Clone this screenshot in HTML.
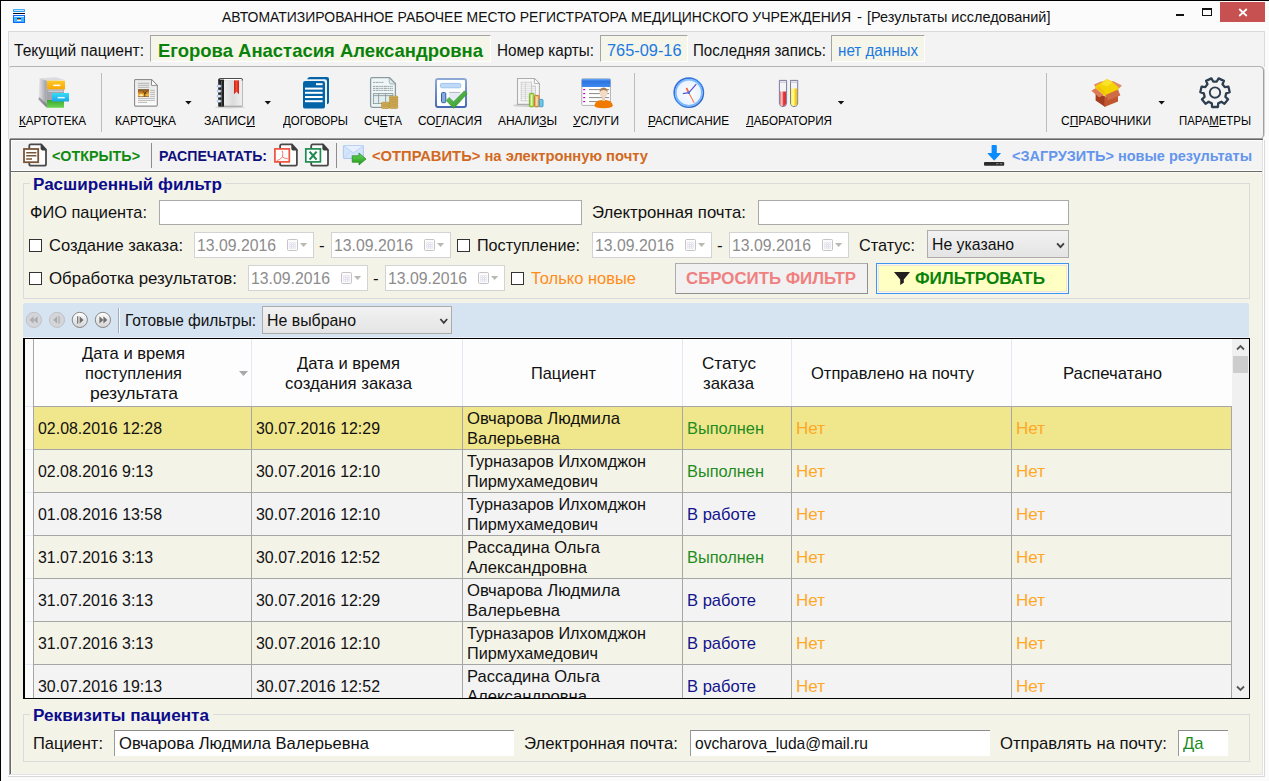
<!DOCTYPE html>
<html><head><meta charset="utf-8"><title>UI</title>
<style>
html,body{margin:0;padding:0;background:#fff;}
#win{position:relative;width:1269px;height:781px;overflow:hidden;background:#fbfbfb;font-family:"Liberation Sans",sans-serif;}
#win div,#win span,#win svg{position:absolute;box-sizing:border-box;}
.t{white-space:pre;transform-origin:0 50%;font-family:"Liberation Sans",sans-serif;}
.sunk{background:#f5f5e9;border-top:1px solid #a4a4a4;border-left:1px solid #a4a4a4;border-right:1px solid #fff;border-bottom:1px solid #fff;}
.inp{background:#fff;border:1px solid #a9a9a9;}
.date{background:#fff;border:1px solid #d3d3d3;width:120px;height:26px;}
.cb{width:13px;height:13px;border:1px solid #333;background:#fff;}
.vsep{width:1px;background:#bcbcbc;}
.sel{background:linear-gradient(#f2f2f2,#e4e4e4);border:1px solid #acacac;}
.gb{border:1px solid #dadada;}
.row{left:34px;width:1198px;height:42px;}
.hl{left:33px;width:1199px;height:1px;background:#a6a6a6;}
.vl{top:407px;width:1px;height:291px;background:#a6a6a6;}
.hvl{top:339px;width:1px;height:67px;background:#e3e9f3;}
.nb{width:17px;height:17px;border-radius:50%;border:1px solid #b9b9b9;background:linear-gradient(#fafafa,#dcdcdc);}
.t u{text-decoration:underline;text-decoration-thickness:1px;text-underline-offset:0.5px;}

</style></head>
<body>
<div id="win">
<!-- window frame -->
<div style="left:0;top:0;width:1269px;height:1px;background:#000"></div>
<div style="left:0;top:0;width:1px;height:781px;background:#000"></div>
<!-- title bar buttons -->
<div style="left:1220px;top:2px;width:45px;height:20px;background:#c75050"></div>
<svg style="left:1238px;top:8px" width="10" height="9" viewBox="0 0 10 9"><path d="M1.2 1 L8.8 8 M8.8 1 L1.2 8" stroke="#fff" stroke-width="1.7" fill="none"/></svg>
<div style="left:1176px;top:14px;width:8px;height:2px;background:#111"></div>
<div style="left:1202px;top:8px;width:10px;height:8px;border:1px solid #111;border-top:2px solid #111"></div>
<!-- patient bar -->
<div style="left:8px;top:31px;width:1257px;height:36px;background:#f3f3f3;border-top:1px solid #dadada;border-left:1px solid #dadada;border-right:1px solid #dadada"></div>
<div class="sunk" style="left:150px;top:35px;width:341px;height:27px"></div>
<div class="sunk" style="left:600px;top:35px;width:88px;height:27px"></div>
<div class="sunk" style="left:831px;top:35px;width:94px;height:27px"></div>
<!-- toolbar -->
<div style="left:8px;top:66px;width:1256px;height:73px;background:#f3f3f3;border-top:1px solid #b4b4b4;border-left:1px solid #dcdcdc;border-right:1px solid #a0a0a0;border-radius:4px 5px 5px 0;box-shadow:1px 0 0 #d4d4d4"></div>
<div class="vsep" style="left:101px;top:73px;height:59px"></div>
<div class="vsep" style="left:634px;top:73px;height:59px"></div>
<div class="vsep" style="left:1046px;top:73px;height:59px"></div>
<!-- frame top -->
<div style="left:10px;top:138px;width:1253px;height:1px;background:#9a9a9a;border-radius:0 3px 0 0"></div>
<div style="left:9px;top:139px;width:1254px;height:1px;background:#666"></div>
<!-- action bar -->
<div style="left:11px;top:140px;width:1251px;height:31px;background:#f3f3f3;border-top:1px solid #fff;border-bottom:1px solid #fff;border-left:1px solid #fff"></div>
<div style="left:11px;top:171px;width:1251px;height:1px;background:#6a6a6a"></div>
<div class="vsep" style="left:151px;top:143px;height:25px;background:#8c8c8c"></div>
<div class="vsep" style="left:336px;top:143px;height:25px;background:#8c8c8c"></div>
<!-- content -->
<div style="left:9px;top:139px;width:1px;height:636px;background:#a0a0a0"></div>
<div style="left:10px;top:139px;width:1px;height:635px;background:#696969"></div>
<div style="left:11px;top:172px;width:1251px;height:602px;background:#f4f3e8;border-top:1px solid #fbfbf2;border-left:1px solid #fbfbf2"></div>
<div style="left:1262px;top:140px;width:1px;height:635px;background:#e3e3e3"></div>
<div style="left:1263px;top:140px;width:1px;height:636px;background:#fff"></div>
<div style="left:1264px;top:140px;width:1px;height:637px;background:#d9d9d9"></div>
<div style="left:10px;top:774px;width:1253px;height:1px;background:#e3e3e3"></div>
<div style="left:9px;top:775px;width:1255px;height:1px;background:#fff"></div>
<div style="left:8px;top:776px;width:1257px;height:1px;background:#d9d9d9"></div>
<!-- filter groupbox -->
<div class="gb" style="left:23px;top:183px;width:1227px;height:116px"></div>
<div style="left:30px;top:178px;width:195px;height:12px;background:#f4f3e8"></div>
<div class="inp" style="left:159px;top:200px;width:423px;height:25px"></div>
<div class="inp" style="left:758px;top:200px;width:311px;height:25px"></div>
<div class="cb" style="left:29px;top:239px"></div>
<div class="date" style="left:194px;top:232px"></div>
<div class="date" style="left:331px;top:232px"></div>
<div class="cb" style="left:457px;top:239px"></div>
<div class="date" style="left:592px;top:232px"></div>
<div class="date" style="left:729px;top:232px"></div>
<div class="sel" style="left:927px;top:230px;width:142px;height:28px"></div>
<div class="cb" style="left:29px;top:272px"></div>
<div class="date" style="left:248px;top:265px"></div>
<div class="date" style="left:385px;top:265px"></div>
<div class="cb" style="left:511px;top:272px"></div>
<div style="left:675px;top:263px;width:193px;height:31px;background:#f1f1f1;border:1px solid #adadad;border-bottom-color:#8f8f8f;border-right-color:#8f8f8f"></div>
<div style="left:876px;top:263px;width:193px;height:31px;background:#ffffc4;border:1px solid #3c96f0;box-shadow:inset 0 0 0 1px #fbf6f0, inset 0 0 0 2px #e9e6df"></div>
<!-- navigator -->
<div style="left:23px;top:303px;width:1226px;height:35px;background:#d6e3f1;border-radius:3px 3px 0 0"></div>
<div class="vsep" style="left:118px;top:308px;height:25px;background:#f6f9fc;width:2px;border-left:1px solid #a4aeb9"></div>
<div style="left:23px;top:337px;width:1226px;height:1px;background:#edf2f8"></div>
<div class="sel" style="left:262px;top:306px;width:190px;height:28px"></div>
<!-- grid -->
<div style="left:23px;top:338px;width:1227px;height:361px;background:#fdfdfd;border:1px solid #000;border-left:2px solid #000"></div>
<div style="left:25px;top:339px;width:8px;height:359px;background:#fbfbfb"></div>
<div style="left:33px;top:339px;width:1px;height:359px;background:#a6a6a6"></div>
<div class="row" style="top:407px;height:42px;background:#f0e68c"></div>
<div class="row" style="top:450px;height:42px;background:#f4f3e8"></div>
<div class="row" style="top:493px;height:42px;background:#f3f3f3"></div>
<div class="row" style="top:536px;height:42px;background:#f4f3e8"></div>
<div class="row" style="top:579px;height:42px;background:#f3f3f3"></div>
<div class="row" style="top:622px;height:42px;background:#f4f3e8"></div>
<div class="row" style="top:665px;height:33px;background:#f3f3f3"></div>
<div class="hl" style="top:406px"></div>
<div class="hl" style="top:449px"></div>
<div class="hl" style="top:492px"></div>
<div class="hl" style="top:535px"></div>
<div class="hl" style="top:578px"></div>
<div class="hl" style="top:621px"></div>
<div class="hl" style="top:664px"></div>
<div class="vl" style="left:251px"></div>
<div class="vl" style="left:462px"></div>
<div class="vl" style="left:682px"></div>
<div class="vl" style="left:791px"></div>
<div class="vl" style="left:1011px"></div>
<div class="vl" style="left:1231px"></div>
<div class="hvl" style="left:251px"></div>
<div class="hvl" style="left:462px"></div>
<div class="hvl" style="left:682px"></div>
<div class="hvl" style="left:791px"></div>
<div class="hvl" style="left:1011px"></div>
<div style="left:1232px;top:339px;width:17px;height:359px;background:#f0f0f0"></div>
<div style="left:1233px;top:356px;width:15px;height:17px;background:#cdcdcd"></div>
<svg style="left:1236px;top:344px" width="9" height="7" viewBox="0 0 9 7"><path d="M1 5.5 L4.5 2 L8 5.5" stroke="#555" stroke-width="1.8" fill="none"/></svg>
<svg style="left:1236px;top:685px" width="9" height="7" viewBox="0 0 9 7"><path d="M1 1.5 L4.5 5 L8 1.5" stroke="#555" stroke-width="1.8" fill="none"/></svg>
<svg style="left:238px;top:370px" width="11" height="7" viewBox="0 0 11 7"><path d="M1 1 L10 1 L5.5 6 Z" fill="#a8a8a8"/></svg>
<div class="gb" style="left:23px;top:714px;width:1227px;height:48px"></div>
<div style="left:30px;top:709px;width:183px;height:12px;background:#f4f3e8"></div>
<div style="left:114px;top:730px;width:400px;height:26px;background:#fff;border-top:1px solid #8c8c8c;border-left:1px solid #9a9a9a"></div>
<div style="left:690px;top:730px;width:300px;height:26px;background:#fff;border-top:1px solid #8c8c8c;border-left:1px solid #9a9a9a"></div>
<div style="left:1178px;top:730px;width:50px;height:26px;background:#fff;border-top:1px solid #8c8c8c;border-left:1px solid #9a9a9a"></div>
<div style="left:25px;top:406px;width:8px;height:1px;background:#e4eaf4"></div>
<div style="left:25px;top:449px;width:8px;height:1px;background:#e4eaf4"></div>
<div style="left:25px;top:492px;width:8px;height:1px;background:#e4eaf4"></div>
<div style="left:25px;top:535px;width:8px;height:1px;background:#e4eaf4"></div>
<div style="left:25px;top:578px;width:8px;height:1px;background:#e4eaf4"></div>
<div style="left:25px;top:621px;width:8px;height:1px;background:#e4eaf4"></div>
<div style="left:25px;top:664px;width:8px;height:1px;background:#e4eaf4"></div>
<svg style="left:0;top:0" width="1269" height="781" viewBox="0 0 1269 781">
<defs>
<linearGradient id="gCab" x1="0" x2="1"><stop offset="0" stop-color="#e9e9ec"/><stop offset="1" stop-color="#9c9ca6"/></linearGradient>
<linearGradient id="gYel" x1="0" y1="0" x2="0" y2="1"><stop offset="0" stop-color="#ffc928"/><stop offset="1" stop-color="#f7a600"/></linearGradient>
<linearGradient id="gCy" x1="0" y1="0" x2="0" y2="1"><stop offset="0" stop-color="#35dcf6"/><stop offset="1" stop-color="#1aa8e6"/></linearGradient>
<linearGradient id="gGr" x1="0" y1="0" x2="0" y2="1"><stop offset="0" stop-color="#3aa82c"/><stop offset="1" stop-color="#6fd455"/></linearGradient>
<linearGradient id="gDoc" x1="0" y1="0" x2="0" y2="1"><stop offset="0" stop-color="#e4e4e4"/><stop offset="1" stop-color="#fafafa"/></linearGradient>
<linearGradient id="gSun" x1="0" y1="0" x2="0" y2="1"><stop offset="0" stop-color="#6e4a1e"/><stop offset=".55" stop-color="#e0912a"/><stop offset=".8" stop-color="#ffc23c"/><stop offset="1" stop-color="#7a4a14"/></linearGradient>
<linearGradient id="gNb" x1="0" x2="1"><stop offset="0" stop-color="#ececec"/><stop offset=".5" stop-color="#dcdcdc"/><stop offset="1" stop-color="#efefef"/></linearGradient>
<linearGradient id="gRed" x1="0" x2="1"><stop offset="0" stop-color="#c8201a"/><stop offset=".5" stop-color="#f04a32"/><stop offset="1" stop-color="#c8201a"/></linearGradient>
<linearGradient id="gFrm" x1="0" y1="0" x2="0" y2="1"><stop offset="0" stop-color="#8fa9d6"/><stop offset="1" stop-color="#4669b4"/></linearGradient>
<linearGradient id="gChk" x1="0" y1="0" x2="1" y2="1"><stop offset="0" stop-color="#6ac85a"/><stop offset="1" stop-color="#2f962a"/></linearGradient>
<linearGradient id="gHdr" x1="0" y1="0" x2="0" y2="1"><stop offset="0" stop-color="#6fb0ff"/><stop offset=".3" stop-color="#2c74e0"/><stop offset="1" stop-color="#3f8af0"/></linearGradient>
<radialGradient id="gClk" cx=".5" cy=".5" r=".5"><stop offset="0" stop-color="#ffffff"/><stop offset=".8" stop-color="#eaf3ff"/><stop offset="1" stop-color="#c8e0ff"/></radialGradient>
<linearGradient id="gRng" x1="0" y1="0" x2="1" y2="1"><stop offset="0" stop-color="#2a5fd0"/><stop offset=".5" stop-color="#3a8af0"/><stop offset="1" stop-color="#2456b8"/></linearGradient>
<linearGradient id="gTr" x1="0" x2="1"><stop offset="0" stop-color="#f06a6a"/><stop offset=".3" stop-color="#ffd0d0"/><stop offset=".6" stop-color="#e03a3a"/><stop offset="1" stop-color="#d83030"/></linearGradient>
<linearGradient id="gTy" x1="0" x2="1"><stop offset="0" stop-color="#fff23a"/><stop offset=".35" stop-color="#ffffa0"/><stop offset=".7" stop-color="#f8d21a"/><stop offset="1" stop-color="#f0c010"/></linearGradient>
<linearGradient id="gCoin" x1="0" y1="0" x2="0" y2="1"><stop offset="0" stop-color="#f6e3a0"/><stop offset="1" stop-color="#c89a30"/></linearGradient>
<linearGradient id="gArr" x1="0" y1="0" x2="0" y2="1"><stop offset="0" stop-color="#6fd45a"/><stop offset="1" stop-color="#1f9a1f"/></linearGradient>
<linearGradient id="gBtnE" x1="0" y1="0" x2="0" y2="1"><stop offset="0" stop-color="#ffffff"/><stop offset="1" stop-color="#d4d4d4"/></linearGradient>
</defs>

<!-- title icon -->
<g>
<rect x="13" y="9" width="12" height="3.2" rx="1" fill="#2c9cf2"/>
<rect x="14" y="9.8" width="10" height="1.2" fill="#bdeeff"/>
<rect x="13" y="12" width="12" height="3" fill="#fff"/>
<rect x="13" y="13" width="12" height="1" fill="#0a0a14"/>
<rect x="13" y="15" width="12" height="8" fill="#0a66ff"/>
<rect x="14" y="16" width="10" height="6" fill="#43b3ff"/>
<rect x="14" y="16" width="10" height="1" fill="#d8f2ff"/>
<rect x="17" y="18" width="4" height="1" fill="#153a5a"/>
<rect x="18" y="19" width="2" height="1" fill="#ff8a2a"/>
<rect x="17" y="20" width="4" height="1" fill="#fff"/>
</g>

<!-- KARTOTEKA: cabinet -->
<g>
<polygon points="39.5,78.2 55.8,77.2 64.7,80 47,81" fill="#dcdce0"/>
<polygon points="39.5,78.2 46.8,80.8 46.8,107.8 38.5,99.6" fill="url(#gCab)"/>
<polygon points="38.5,99.6 46.8,107.8 46.8,104 39,97" fill="#6e6e76" opacity=".6"/>
<rect x="47" y="80.7" width="18" height="8.8" fill="url(#gYel)"/>
<rect x="53.3" y="84.6" width="7" height="1.5" fill="#fff"/>
<rect x="47" y="89.5" width="17" height="11" fill="#a4a6ae"/>
<rect x="48.4" y="90.6" width="15" height="1.2" fill="#d6d6dc"/>
<rect x="47" y="100" width="17" height="7.8" fill="url(#gGr)"/>
<rect x="52" y="93" width="17" height="8.5" fill="url(#gCy)"/>
<rect x="57.7" y="96.9" width="7" height="1.5" fill="#e6f8ff"/>
</g>

<!-- KARTOCHKA: doc with picture -->
<g>
<path d="M135.2 79.6 H151.5 L157.3 85.4 V105 Q157.3 106.1 156.2 106.1 H135.2 Q134.6 106.1 134.6 105 V80.7 Q134.6 79.6 135.2 79.6 Z" fill="#fff" stroke="#8e8e8e" stroke-width="1.2"/>
<path d="M136.2 81.2 H151 V85.8 H155.7 V104.5 H136.2 Z" fill="url(#gDoc)"/>
<path d="M151.5 79.6 V85.4 H157.3 Z" fill="#fff" stroke="#8e8e8e" stroke-width="1"/>
<g stroke="#b4b4b4" stroke-width="0.9">
<path d="M138 83.4 H149 M138 85.4 H149 M138 87.4 H149"/>
<path d="M150.2 90.4 H155 M150.2 92.4 H155 M150.2 94.4 H155 M150.2 96.4 H155"/>
<path d="M138 98.4 H155 M138 100.4 H155 M138 102.4 H147"/>
</g>
<rect x="138" y="89.2" width="11" height="7.6" fill="url(#gSun)"/>
<ellipse cx="141.2" cy="95.3" rx="2" ry="1" fill="#fff2b0"/>
<path d="M144.8 96.6 V92.6 M144.8 93.6 L143.2 91.4 M144.8 93.2 L146.8 91.2 M144.8 94.4 L146.2 93" stroke="#3a260c" stroke-width="0.7" fill="none"/>
</g>

<!-- ZAPISI: notebook -->
<g>
<ellipse cx="230" cy="107.2" rx="15" ry="1.3" fill="#000" opacity=".12"/>
<rect x="218.3" y="78.3" width="24.6" height="28.4" rx="1.8" fill="#9c9c9c"/>
<path d="M218.3 80 Q218.3 78.3 220 78.3 H241 Q242.9 78.3 242.9 80 V80.4 H218.3 Z" fill="#2a2a2a"/>
<rect x="224" y="80.2" width="18.3" height="25.6" rx="1" fill="url(#gNb)"/>
<path d="M220.2 79 H241 Q242.3 79 242.3 80.6 H219.4 Z" fill="#fff"/>
<rect x="218.3" y="79.6" width="5.7" height="27" fill="#222"/>
<rect x="221" y="81" width="1" height="25" fill="#555"/>
<rect x="234" y="80.4" width="5" height="13.6" fill="url(#gRed)"/>
<path d="M234 94 L236.5 91.6 L239 94 V94.2 H234 Z" fill="url(#gNb)"/>
<path d="M234 90 V94 L236.5 91.6 L239 94 V90 Z" fill="url(#gRed)"/>
<g fill="#fff" stroke="#7f9cc8" stroke-width="0.7">
<rect x="217.2" y="85" width="4" height="2.2" rx="1.1"/>
<rect x="217.2" y="90" width="4" height="2.2" rx="1.1"/>
<rect x="217.2" y="95" width="4" height="2.2" rx="1.1"/>
<rect x="217.2" y="100" width="4" height="2.2" rx="1.1"/>
</g>
</g>

<!-- DOGOVORY -->
<g fill="#0464a8">
<path d="M307 79.2 Q308.2 77 310 77 H327 Q329 77 329 79 V102.5 Q328.6 104 327 104.2 V81.5 Q327 79.2 324.8 79.2 Z"/>
<rect x="303" y="81" width="22" height="27.6" rx="2.2"/>
</g>
<g fill="#fff">
<rect x="316" y="83.2" width="6.6" height="2"/>
<rect x="305" y="87.6" width="17.6" height="2"/>
<rect x="305" y="91.8" width="17.6" height="2"/>
<rect x="305" y="96" width="17.6" height="2"/>
<rect x="305" y="100.2" width="17.6" height="2"/>
</g>

<!-- SCHETA -->
<g>
<path d="M372.2 77.6 H389.6 L395.4 83.4 V105.6 Q395.4 107.4 393.6 107.4 H372.2 Q370.6 107.4 370.6 105.6 V79.4 Q370.6 77.6 372.2 77.6 Z" fill="#eff6f7" stroke="#8c9c9e" stroke-width="1.3"/>
<path d="M389.2 78.2 V82 Q389.2 84 391.2 84 H395 Z" fill="#dce8ea" stroke="#9aaaac" stroke-width="0.8"/>
<g stroke="#8e9a9c" stroke-width="0.9" stroke-dasharray="2 0.6 3 0.6 1.5 0.6">
<path d="M373 82.4 H384"/><path d="M373 86.4 H393"/><path d="M373 88.4 H393"/><path d="M373 90.4 H393"/>
</g>
<rect x="373.4" y="93.6" width="19.4" height="10" fill="#e2eef0" stroke="#8e9c9e" stroke-width="0.9"/>
<path d="M373.4 95.6 H392.8 M378.6 93.6 V103.6 M385.6 93.6 V103.6" stroke="#8e9c9e" stroke-width="0.9"/>
<g fill="url(#gCoin)" stroke="#a67c1e" stroke-width="0.7">
<rect x="381.4" y="102.3" width="8" height="2" rx="1"/>
<rect x="381.4" y="104.3" width="8" height="2" rx="1"/>
<rect x="381.4" y="106.3" width="8" height="2" rx="1"/>
<rect x="389.4" y="96.2" width="8.4" height="2" rx="1"/>
<rect x="389.4" y="98.2" width="8.4" height="2" rx="1"/>
<rect x="389.4" y="100.2" width="8.4" height="2" rx="1"/>
<rect x="389.4" y="102.3" width="8.4" height="2" rx="1"/>
<rect x="389.4" y="104.3" width="8.4" height="2" rx="1"/>
<rect x="389.4" y="106.3" width="8.4" height="2" rx="1"/>
</g>
</g>

<!-- SOGLASIYA -->
<g>
<rect x="436" y="79" width="30" height="28" rx="2" fill="#fff" stroke="url(#gFrm)" stroke-width="2"/>
<rect x="440.4" y="83.4" width="20.4" height="4.4" rx="1.4" fill="#c2d9f4" stroke="#93c2f2" stroke-width="0.9"/>
<rect x="441.5" y="92.5" width="4.3" height="10.2" rx="1.2" fill="#8aa9d6" stroke="#2f62b6" stroke-width="1"/>
<rect x="449.3" y="92.4" width="11" height="10.4" fill="#e6eaf5"/>
<path d="M449.3 92.4 H460.3" stroke="#b4b4bc" stroke-width="1"/>
<path d="M446.2 100.4 L449 97.4 L453.6 101.8 L464.4 90.8 L467.2 93.8 L453.6 108.4 Z" fill="url(#gChk)" stroke="#2a8a24" stroke-width="0.5"/>
</g>

<!-- ANALIZY -->
<g>
<ellipse cx="528" cy="105.4" rx="15" ry="1.6" fill="#000" opacity=".14"/>
<path d="M517.5 78.5 H534.4 L539.4 83.5 V104.4 H517.5 Z" fill="#f7f7f7" stroke="#adadad" stroke-width="1.1"/>
<path d="M534.4 78.5 V83.5 H539.4 Z" fill="#fff" stroke="#adadad" stroke-width="0.9"/>
<rect x="521.2" y="82.2" width="10.4" height="18.6" fill="#fff" stroke="#c4c4c4" stroke-width="0.8"/>
<rect x="531.6" y="86.2" width="4" height="14.6" fill="#fff" stroke="#c4c4c4" stroke-width="0.8"/>
<path d="M521.2 84.2 H531.6 M521.2 86.2 H535.6 M521.2 88.2 H535.6 M521.2 90.2 H535.6 M521.2 92.2 H535.6 M521.2 94.2 H535.6 M521.2 96.2 H535.6 M521.2 98.2 H535.6 M525.4 82.2 V100.8" stroke="#cdcdcd" stroke-width="0.8"/>
<rect x="529.4" y="93.4" width="4.6" height="13.4" rx="0.8" fill="#b4dc6a" stroke="#7db22c" stroke-width="1"/>
<rect x="531" y="95" width="1.2" height="10.4" fill="#e4f6b8"/>
<rect x="534.6" y="95.4" width="4.4" height="11.4" rx="0.8" fill="#f4b870" stroke="#c47a2e" stroke-width="1"/>
<rect x="536.2" y="97" width="1.2" height="8.4" fill="#fde0b8"/>
<rect x="539.4" y="99.4" width="3.6" height="7.4" rx="0.8" fill="#6ac8ea" stroke="#3d9fcc" stroke-width="1"/>
</g>

<!-- USLUGI -->
<g>
<rect x="581.8" y="78.8" width="28.6" height="26.6" rx="1" fill="#fff" stroke="#a8a8a8" stroke-width="0.9"/>
<rect x="581.8" y="78.8" width="28.6" height="8.2" fill="url(#gHdr)"/>
<g fill="#c800c8"><rect x="583.2" y="89" width="2" height="1.2"/><rect x="583.2" y="93" width="2" height="1.2"/><rect x="583.2" y="97" width="2" height="1.2"/><rect x="583.2" y="101" width="2" height="1.2"/></g>
<path d="M589 89.6 H609 M589 93.6 H609 M589 97.6 H609 M589 101.6 H600" stroke="#7a7a7a" stroke-width="0.9"/>
<path d="M594.4 105.6 Q595.4 100.2 601.6 100 H605.6 Q611.8 100.2 612.8 105.6 Q612.4 108.3 603.6 108.3 Q594.8 108.3 594.4 105.6 Z" fill="#f07a00"/>
<rect x="602.2" y="97" width="2.8" height="4" fill="#e6c8aa"/>
<ellipse cx="603.6" cy="93" rx="3.9" ry="4.9" fill="#f3dcc6"/>
<path d="M599.6 92.4 Q599.4 87.6 603.6 87.4 Q607.8 87.6 607.6 92.4 Q606.6 90 603.6 90 Q600.6 90 599.6 92.4 Z" fill="#a67c52"/>
</g>

<!-- RASPISANIE: clock -->
<g>
<circle cx="688.8" cy="92.7" r="14.6" fill="url(#gClk)" stroke="url(#gRng)" stroke-width="1.6"/>
<circle cx="688.8" cy="92.7" r="13" fill="none" stroke="#7ab8fa" stroke-width="1.6"/>
<path d="M686.6 88.3 L688.8 92.7 L694.1 102.8" stroke="#ff7a50" stroke-width="1.1" fill="none"/>
<path d="M686.4 88 L688.4 92" stroke="#ff6a40" stroke-width="1.7"/>
<path d="M696.3 84.2 L688.8 92.7 L682.8 93.6" stroke="#5a52d0" stroke-width="1.2" fill="none"/>
<circle cx="688.8" cy="92.7" r="1.2" fill="#2a7ae0"/>
</g>

<!-- LABORATORIYA: test tubes -->
<g>
<path d="M779.4 80.4 H786.6 V103 Q786.6 106.6 783 106.6 Q779.4 106.6 779.4 103 Z" fill="#f4f4f6" stroke="#6c6c92" stroke-width="0.9"/>
<path d="M780 91.6 H786 V103 Q786 106 783 106 Q780 106 780 103 Z" fill="url(#gTr)"/>
<path d="M779.4 82.2 H786.6" stroke="#b8b8c8" stroke-width="0.8"/>
<path d="M790.5 80.4 H797.7 V103 Q797.7 106.6 794.1 106.6 Q790.5 106.6 790.5 103 Z" fill="#f4f4f6" stroke="#6c6c92" stroke-width="0.9"/>
<path d="M791.1 88.4 H797.1 V103 Q797.1 106 794.1 106 Q791.1 106 791.1 103 Z" fill="url(#gTy)"/>
<path d="M790.5 82.2 H797.7" stroke="#b8b8c8" stroke-width="0.8"/>
</g>

<!-- SPRAVOCHNIKI: box -->
<g>
<polygon points="1094,84.6 1101,81.6 1113,81 1122,85.4 1119,88.6 1096,88.4" fill="#e08c68"/>
<polygon points="1095.4,88.6 1095.4,86.2 1101.4,82.4 1107,79 1112,81.6 1118.6,87.6 1118.4,90 1105,96.6" fill="#f4d400"/>
<polygon points="1101,84 1107,79.2 1112.6,82.4 1107,86.6" fill="#fbe32a"/>
<polygon points="1096,88 1105,95 1105,92 1099,86" fill="#efb812" opacity=".7"/>
<polygon points="1095.6,92 1105.2,96.4 1105.2,107 1095.6,100.4" fill="#a23c1e"/>
<polygon points="1104.4,97 1118,92 1118,101.4 1104.4,107" fill="#c0552f"/>
<polygon points="1105.4,95 1118,89.6 1120.4,95.4 1108,100.2" fill="#cf6c46"/>
<polygon points="1091.4,90.8 1095.5,88.2 1103.6,95 1099.2,97.6" fill="#dd7a5a"/>
</g>
<!-- PARAMETRY: gear -->
<path d="M1218.18 103.34 L1217.93 107.00 L1212.07 107.00 L1211.82 103.34 L1208.59 101.78 L1205.57 103.87 L1201.91 99.29 L1204.62 96.81 L1203.82 93.31 L1200.30 92.25 L1201.61 86.54 L1205.24 87.11 L1207.47 84.30 L1206.11 80.89 L1211.39 78.35 L1213.21 81.54 L1216.79 81.54 L1218.61 78.35 L1223.89 80.89 L1222.53 84.30 L1224.76 87.11 L1228.39 86.54 L1229.70 92.25 L1226.18 93.31 L1225.38 96.81 L1228.09 99.29 L1224.43 103.87 L1221.41 101.78 Z" fill="none" stroke="#2c3e50" stroke-width="2.3" stroke-linejoin="round"/>
<circle cx="1215.0" cy="92.6" r="5.2" fill="none" stroke="#2c3e50" stroke-width="1.9"/>
<path d="M185.20000000000002 101 H191.6 L188.4 104.4 Z" fill="#111"/>
<path d="M264.6 101 H271.0 L267.8 104.4 Z" fill="#111"/>
<path d="M837.8 101 H844.2 L841 104.4 Z" fill="#111"/>
<path d="M1158.3999999999999 101 H1164.8 L1161.6 104.4 Z" fill="#111"/>
<!-- open icon -->
<path d="M30.6 144.3 H41.2 L46 149.6 V164 Q46 165.7 44.3 165.7 H31 Q29.3 165.7 29.3 164 V145.6 Q29.3 144.3 30.6 144.3 Z" fill="#fdfdfd" stroke="#4a4a4a" stroke-width="1.8" stroke-linejoin="round"/>
<path d="M40.6 143.6 L46.8 150.4 H42.4 Q40.6 150.4 40.6 148.6 Z" fill="#3c3c3c"/>
<rect x="24" y="149" width="14.2" height="13.2" fill="#fff" stroke="#7a5638" stroke-width="1.8"/>
<path d="M26.2 152.7 H36.4 M26.2 155.8 H36.4 M26.2 158.9 H32" stroke="#7a5638" stroke-width="1.5"/>
<!-- pdf -->
<path d="M281.7 144.4 H291.90000000000003 L296.90000000000003 149.8 V164 Q296.90000000000003 165.6 295.3 165.6 H281.7 Q280.1 165.6 280.1 164 V146 Q280.1 144.4 281.7 144.4 Z" fill="#fdfdfd" stroke="#4a4a4a" stroke-width="1.8" stroke-linejoin="round"/>
<path d="M291.3 143.6 L297.7 150.6 H293.1 Q291.3 150.6 291.3 148.8 Z" fill="#3c3c3c"/>
<rect x="274.9" y="148.9" width="14.4" height="13" fill="#fff" stroke="#f0503c" stroke-width="1.7"/>
<path d="M282.2 150.6 Q283.4 153.6 282.4 157 Q280 160 276.8 160.6 M282.4 157 Q285 158.6 287.8 158.8" stroke="#f0705c" stroke-width="0.9" fill="none"/>
<!-- xls -->
<path d="M312.79999999999995 144.4 H323.0 L328.0 149.8 V164 Q328.0 165.6 326.4 165.6 H312.79999999999995 Q311.2 165.6 311.2 164 V146 Q311.2 144.4 312.79999999999995 144.4 Z" fill="#fdfdfd" stroke="#4a4a4a" stroke-width="1.8" stroke-linejoin="round"/>
<path d="M322.4 143.6 L328.79999999999995 150.6 H324.2 Q322.4 150.6 322.4 148.8 Z" fill="#3c3c3c"/>
<rect x="305.8" y="148.9" width="14.6" height="13" fill="#fff" stroke="#1e8c50" stroke-width="1.7"/>
<path d="M309.6 151.6 L316.6 159.6 M316.6 151.6 L309.6 159.6" stroke="#1e8c50" stroke-width="2.2"/>
<!-- mail -->
<rect x="343.4" y="145.5" width="20" height="13" rx="0.8" fill="#d4e4fa" stroke="#a4c4f0" stroke-width="0.9"/>
<path d="M343.6 145.8 L353.4 153 L363.2 145.8" stroke="#b4d0f6" stroke-width="0.9" fill="#e6f0fd"/>
<path d="M343.6 158.2 L350.4 151.2 M363.2 158.2 L356.4 151.2" stroke="#bcd4f6" stroke-width="0.8"/>
<path d="M352.2 155.8 H359 V153 L366 159 L359 165 V162.2 H352.2 Z" fill="url(#gArr)" stroke="#1a8a1a" stroke-width="0.7" stroke-linejoin="round"/>
<!-- download -->
<path d="M991.6 145.8 Q991.6 144.9 992.5 144.9 H995.9 Q996.8 144.9 996.8 145.8 V153 H1000.4 Q1001 153.2 1000.6 153.8 L994.6 160.2 Q994.2 160.6 993.8 160.2 L987.8 153.8 Q987.4 153.2 988 153 H991.6 Z" fill="#0a8cff"/>
<rect x="984" y="162.1" width="20.2" height="3.6" rx="0.9" fill="#2c2c2c"/>
<rect x="996" y="163.3" width="2.6" height="0.9" fill="#8c8c8c"/><rect x="999.8" y="163.3" width="2.6" height="0.9" fill="#8c8c8c"/>
<!-- calendars -->
<rect x="287.5" y="239.5" width="10" height="11" rx="1" fill="#fbfbfd" stroke="#c9c3c3" stroke-width="1"/><rect x="289.3" y="242.3" width="6.4" height="6.4" fill="#e1e1ed"/><rect x="290.0" y="243.0" width="1" height="1" fill="#fff"/><rect x="290.0" y="245.1" width="1" height="1" fill="#fff"/><rect x="290.0" y="247.2" width="1" height="1" fill="#fff"/><rect x="292.1" y="243.0" width="1" height="1" fill="#fff"/><rect x="292.1" y="245.1" width="1" height="1" fill="#fff"/><rect x="292.1" y="247.2" width="1" height="1" fill="#fff"/><rect x="294.2" y="243.0" width="1" height="1" fill="#fff"/><rect x="294.2" y="245.1" width="1" height="1" fill="#fff"/><rect x="294.2" y="247.2" width="1" height="1" fill="#fff"/><path d="M300 243 H307.2 L303.6 247 Z" fill="#b9b9b3"/>
<rect x="424.5" y="239.5" width="10" height="11" rx="1" fill="#fbfbfd" stroke="#c9c3c3" stroke-width="1"/><rect x="426.3" y="242.3" width="6.4" height="6.4" fill="#e1e1ed"/><rect x="427.0" y="243.0" width="1" height="1" fill="#fff"/><rect x="427.0" y="245.1" width="1" height="1" fill="#fff"/><rect x="427.0" y="247.2" width="1" height="1" fill="#fff"/><rect x="429.1" y="243.0" width="1" height="1" fill="#fff"/><rect x="429.1" y="245.1" width="1" height="1" fill="#fff"/><rect x="429.1" y="247.2" width="1" height="1" fill="#fff"/><rect x="431.2" y="243.0" width="1" height="1" fill="#fff"/><rect x="431.2" y="245.1" width="1" height="1" fill="#fff"/><rect x="431.2" y="247.2" width="1" height="1" fill="#fff"/><path d="M437 243 H444.2 L440.6 247 Z" fill="#b9b9b3"/>
<rect x="685.5" y="239.5" width="10" height="11" rx="1" fill="#fbfbfd" stroke="#c9c3c3" stroke-width="1"/><rect x="687.3" y="242.3" width="6.4" height="6.4" fill="#e1e1ed"/><rect x="688.0" y="243.0" width="1" height="1" fill="#fff"/><rect x="688.0" y="245.1" width="1" height="1" fill="#fff"/><rect x="688.0" y="247.2" width="1" height="1" fill="#fff"/><rect x="690.1" y="243.0" width="1" height="1" fill="#fff"/><rect x="690.1" y="245.1" width="1" height="1" fill="#fff"/><rect x="690.1" y="247.2" width="1" height="1" fill="#fff"/><rect x="692.2" y="243.0" width="1" height="1" fill="#fff"/><rect x="692.2" y="245.1" width="1" height="1" fill="#fff"/><rect x="692.2" y="247.2" width="1" height="1" fill="#fff"/><path d="M698 243 H705.2 L701.6 247 Z" fill="#b9b9b3"/>
<rect x="822.5" y="239.5" width="10" height="11" rx="1" fill="#fbfbfd" stroke="#c9c3c3" stroke-width="1"/><rect x="824.3" y="242.3" width="6.4" height="6.4" fill="#e1e1ed"/><rect x="825.0" y="243.0" width="1" height="1" fill="#fff"/><rect x="825.0" y="245.1" width="1" height="1" fill="#fff"/><rect x="825.0" y="247.2" width="1" height="1" fill="#fff"/><rect x="827.1" y="243.0" width="1" height="1" fill="#fff"/><rect x="827.1" y="245.1" width="1" height="1" fill="#fff"/><rect x="827.1" y="247.2" width="1" height="1" fill="#fff"/><rect x="829.2" y="243.0" width="1" height="1" fill="#fff"/><rect x="829.2" y="245.1" width="1" height="1" fill="#fff"/><rect x="829.2" y="247.2" width="1" height="1" fill="#fff"/><path d="M835 243 H842.2 L838.6 247 Z" fill="#b9b9b3"/>
<rect x="341.5" y="272.5" width="10" height="11" rx="1" fill="#fbfbfd" stroke="#c9c3c3" stroke-width="1"/><rect x="343.3" y="275.3" width="6.4" height="6.4" fill="#e1e1ed"/><rect x="344.0" y="276.0" width="1" height="1" fill="#fff"/><rect x="344.0" y="278.1" width="1" height="1" fill="#fff"/><rect x="344.0" y="280.2" width="1" height="1" fill="#fff"/><rect x="346.1" y="276.0" width="1" height="1" fill="#fff"/><rect x="346.1" y="278.1" width="1" height="1" fill="#fff"/><rect x="346.1" y="280.2" width="1" height="1" fill="#fff"/><rect x="348.2" y="276.0" width="1" height="1" fill="#fff"/><rect x="348.2" y="278.1" width="1" height="1" fill="#fff"/><rect x="348.2" y="280.2" width="1" height="1" fill="#fff"/><path d="M354 276 H361.2 L357.6 280 Z" fill="#b9b9b3"/>
<rect x="478.5" y="272.5" width="10" height="11" rx="1" fill="#fbfbfd" stroke="#c9c3c3" stroke-width="1"/><rect x="480.3" y="275.3" width="6.4" height="6.4" fill="#e1e1ed"/><rect x="481.0" y="276.0" width="1" height="1" fill="#fff"/><rect x="481.0" y="278.1" width="1" height="1" fill="#fff"/><rect x="481.0" y="280.2" width="1" height="1" fill="#fff"/><rect x="483.1" y="276.0" width="1" height="1" fill="#fff"/><rect x="483.1" y="278.1" width="1" height="1" fill="#fff"/><rect x="483.1" y="280.2" width="1" height="1" fill="#fff"/><rect x="485.2" y="276.0" width="1" height="1" fill="#fff"/><rect x="485.2" y="278.1" width="1" height="1" fill="#fff"/><rect x="485.2" y="280.2" width="1" height="1" fill="#fff"/><path d="M491 276 H498.2 L494.6 280 Z" fill="#b9b9b3"/>
<path d="M1057.1 243.4 L1060.5 247.2 L1063.9 243.4" stroke="#3c3c3c" stroke-width="1.8" fill="none"/>
<path d="M440.40000000000003 319.0 L443.8 322.8 L447.2 319.0" stroke="#3c3c3c" stroke-width="1.8" fill="none"/>
<path d="M894 272 H910 L903.8 279.6 V282.8 L900.2 285 V279.6 Z" fill="#231f20"/>
<circle cx="33.9" cy="319.9" r="7.6" fill="#d3d5d8" stroke="#bcbfc4" stroke-width="0.9"/><path d="M33.6 316.2 V323.59999999999997 L29.599999999999998 319.9 Z M37.6 316.2 V323.59999999999997 L33.6 319.9 Z" fill="#a9abae"/>
<circle cx="57" cy="319.9" r="7.6" fill="#d3d5d8" stroke="#bcbfc4" stroke-width="0.9"/><path d="M57.2 316.2 V323.59999999999997 L53.2 319.9 Z" fill="#a9abae"/><rect x="58.5" y="316.2" width="1.2" height="7.4" fill="#a9abae"/>
<circle cx="79.8" cy="319.9" r="7.6" fill="url(#gBtnE)" stroke="#7c7c7c" stroke-width="0.9"/><path d="M79.6 316.2 V323.59999999999997 L83.6 319.9 Z" fill="#6e6e6e"/><rect x="77.1" y="316.2" width="1.2" height="7.4" fill="#6e6e6e"/>
<circle cx="102.9" cy="319.9" r="7.6" fill="url(#gBtnE)" stroke="#7c7c7c" stroke-width="0.9"/><path d="M99.4 316.2 V323.59999999999997 L103.4 319.9 Z M103.4 316.2 V323.59999999999997 L107.4 319.9 Z" fill="#6e6e6e"/>
</svg>

<span class="t" style="left:222px;top:7px;font-size:15px;line-height:20px;color:#111;transform:scaleX(0.9306);">АВТОМАТИЗИРОВАННОЕ РАБОЧЕЕ МЕСТО РЕГИСТРАТОРА МЕДИЦИНСКОГО УЧРЕЖДЕНИЯ</span>
<span class="t" style="left:857px;top:7px;font-size:15px;line-height:20px;color:#111;">-</span>
<span class="t" style="left:866.5px;top:7px;font-size:15px;line-height:20px;color:#111;transform:scaleX(0.9661);">[Результаты исследований]</span>
<span class="t" style="left:14px;top:40px;font-size:16px;line-height:21px;color:#111;transform:scaleX(0.9730);">Текущий пациент:</span>
<span class="t" style="left:158px;top:38px;font-size:19px;line-height:25px;font-weight:bold;color:#0a820a;transform:scaleX(0.9717);">Егорова Анастасия Александровна</span>
<span class="t" style="left:497px;top:40px;font-size:16px;line-height:21px;color:#111;transform:scaleX(0.9532);">Номер карты:</span>
<span class="t" style="left:606.5px;top:40px;font-size:16px;line-height:21px;color:#2079e0;transform:scaleX(1.0212);">765-09-16</span>
<span class="t" style="left:693px;top:40px;font-size:16px;line-height:21px;color:#111;transform:scaleX(0.9443);">Последняя запись:</span>
<span class="t" style="left:838px;top:40px;font-size:16px;line-height:21px;color:#2079e0;transform:scaleX(0.9480);">нет данных</span>
<span class="t" style="left:19px;top:112px;font-size:13px;line-height:17px;color:#000;transform:scaleX(0.8973);"><u>К</u>АРТОТЕКА</span>
<span class="t" style="left:115px;top:112px;font-size:13px;line-height:17px;color:#000;transform:scaleX(0.9182);">КАРТО<u>Ч</u>КА</span>
<span class="t" style="left:204px;top:112px;font-size:13px;line-height:17px;color:#000;transform:scaleX(0.9480);">ЗАПИС<u>И</u></span>
<span class="t" style="left:283px;top:112px;font-size:13px;line-height:17px;color:#000;transform:scaleX(0.8797);"><u>Д</u>ОГОВОРЫ</span>
<span class="t" style="left:364px;top:112px;font-size:13px;line-height:17px;color:#000;transform:scaleX(0.8944);">СЧ<u>Е</u>ТА</span>
<span class="t" style="left:418px;top:112px;font-size:13px;line-height:17px;color:#000;transform:scaleX(0.9068);">СО<u>Г</u>ЛАСИЯ</span>
<span class="t" style="left:498px;top:112px;font-size:13px;line-height:17px;color:#000;transform:scaleX(0.9181);">АНАЛИ<u>З</u>Ы</span>
<span class="t" style="left:573px;top:112px;font-size:13px;line-height:17px;color:#000;transform:scaleX(0.9126);"><u>У</u>СЛУГИ</span>
<span class="t" style="left:648px;top:112px;font-size:13px;line-height:17px;color:#000;transform:scaleX(0.9055);"><u>Р</u>АСПИСАНИЕ</span>
<span class="t" style="left:746px;top:112px;font-size:13px;line-height:17px;color:#000;transform:scaleX(0.8955);"><u>Л</u>АБОРАТОРИЯ</span>
<span class="t" style="left:1061px;top:112px;font-size:13px;line-height:17px;color:#000;transform:scaleX(0.9222);">С<u>П</u>РАВОЧНИКИ</span>
<span class="t" style="left:1179px;top:112px;font-size:13px;line-height:17px;color:#000;transform:scaleX(0.8765);">ПАРА<u>М</u>ЕТРЫ</span>
<span class="t" style="left:52px;top:146px;font-size:15px;line-height:20px;font-weight:bold;color:#0f8a0f;transform:scaleX(0.9551);">&lt;ОТКРЫТЬ&gt;</span>
<span class="t" style="left:159px;top:146px;font-size:15px;line-height:20px;font-weight:bold;color:#10107c;transform:scaleX(0.9421);">РАСПЕЧАТАТЬ:</span>
<span class="t" style="left:372px;top:146px;font-size:15px;line-height:20px;font-weight:bold;color:#d2691e;transform:scaleX(0.9830);">&lt;ОТПРАВИТЬ&gt; на электронную почту</span>
<span class="t" style="left:1012px;top:146px;font-size:15px;line-height:20px;font-weight:bold;color:#6495ed;transform:scaleX(0.9660);">&lt;ЗАГРУЗИТЬ&gt; новые результаты</span>
<span class="t" style="left:33px;top:174px;font-size:16px;line-height:21px;font-weight:bold;color:#0b0b8c;transform:scaleX(1.0653);">Расширенный фильтр</span>
<span class="t" style="left:30px;top:202px;font-size:17px;line-height:22px;color:#111;transform:scaleX(0.9621);">ФИО пациента:</span>
<span class="t" style="left:592px;top:202px;font-size:17px;line-height:22px;color:#111;transform:scaleX(0.9844);">Электронная почта:</span>
<span class="t" style="left:49px;top:235px;font-size:17px;line-height:22px;color:#111;transform:scaleX(0.9731);">Создание заказа:</span>
<span class="t" style="left:477px;top:235px;font-size:17px;line-height:22px;color:#111;transform:scaleX(0.9511);">Поступление:</span>
<span class="t" style="left:859px;top:235px;font-size:17px;line-height:22px;color:#111;transform:scaleX(0.9578);">Статус:</span>
<span class="t" style="left:932px;top:234px;font-size:17px;line-height:22px;color:#111;transform:scaleX(0.9305);">Не указано</span>
<span class="t" style="left:49px;top:268px;font-size:17px;line-height:22px;color:#111;transform:scaleX(0.9913);">Обработка результатов:</span>
<span class="t" style="left:531px;top:268px;font-size:17px;line-height:22px;color:#ff8c1a;transform:scaleX(0.9697);">Только новые</span>
<span class="t" style="left:197px;top:235px;font-size:17px;line-height:22px;color:#8c8c8c;transform:scaleX(0.9284);">13.09.2016</span>
<span class="t" style="left:334px;top:235px;font-size:17px;line-height:22px;color:#8c8c8c;transform:scaleX(0.9284);">13.09.2016</span>
<span class="t" style="left:595px;top:235px;font-size:17px;line-height:22px;color:#8c8c8c;transform:scaleX(0.9284);">13.09.2016</span>
<span class="t" style="left:732px;top:235px;font-size:17px;line-height:22px;color:#8c8c8c;transform:scaleX(0.9284);">13.09.2016</span>
<span class="t" style="left:251px;top:268px;font-size:17px;line-height:22px;color:#8c8c8c;transform:scaleX(0.9284);">13.09.2016</span>
<span class="t" style="left:388px;top:268px;font-size:17px;line-height:22px;color:#8c8c8c;transform:scaleX(0.9284);">13.09.2016</span>
<span class="t" style="left:319px;top:235px;font-size:17px;line-height:22px;color:#111;">-</span>
<span class="t" style="left:717px;top:235px;font-size:17px;line-height:22px;color:#111;">-</span>
<span class="t" style="left:373px;top:268px;font-size:17px;line-height:22px;color:#111;">-</span>
<span class="t" style="left:686px;top:268px;font-size:16px;line-height:21px;font-weight:bold;color:#f08080;transform:scaleX(1.0529);">СБРОСИТЬ ФИЛЬТР</span>
<span class="t" style="left:915px;top:268px;font-size:16px;line-height:21px;font-weight:bold;color:#0a820a;transform:scaleX(1.0679);">ФИЛЬТРОВАТЬ</span>
<span class="t" style="left:125px;top:310px;font-size:16px;line-height:21px;color:#111;transform:scaleX(0.9616);">Готовые фильтры:</span>
<span class="t" style="left:267px;top:310px;font-size:17px;line-height:22px;color:#111;transform:scaleX(0.9348);">Не выбрано</span>
<span class="t" style="left:82px;top:343px;font-size:17px;line-height:22px;color:#111;transform:scaleX(0.9770);">Дата и время</span>
<span class="t" style="left:85px;top:363px;font-size:17px;line-height:22px;color:#111;transform:scaleX(0.9670);">поступления</span>
<span class="t" style="left:90px;top:383px;font-size:17px;line-height:22px;color:#111;transform:scaleX(1.0298);">результата</span>
<span class="t" style="left:297px;top:353px;font-size:17px;line-height:22px;color:#111;transform:scaleX(0.9770);">Дата и время</span>
<span class="t" style="left:285px;top:373px;font-size:17px;line-height:22px;color:#111;transform:scaleX(0.9834);">создания заказа</span>
<span class="t" style="left:531px;top:363px;font-size:17px;line-height:22px;color:#111;transform:scaleX(0.9623);">Пациент</span>
<span class="t" style="left:702px;top:353px;font-size:17px;line-height:22px;color:#111;transform:scaleX(1.0047);">Статус</span>
<span class="t" style="left:703px;top:373px;font-size:17px;line-height:22px;color:#111;transform:scaleX(0.9888);">заказа</span>
<span class="t" style="left:811px;top:363px;font-size:17px;line-height:22px;color:#111;transform:scaleX(0.9708);">Отправлено на почту</span>
<span class="t" style="left:1063px;top:363px;font-size:17px;line-height:22px;color:#111;transform:scaleX(0.9835);">Распечатано</span>
<span class="t" style="left:38px;top:418px;font-size:17px;line-height:22px;color:#111;transform:scaleX(0.9368);">02.08.2016 12:28</span>
<span class="t" style="left:256px;top:418px;font-size:17px;line-height:22px;color:#111;transform:scaleX(0.9368);">30.07.2016 12:29</span>
<span class="t" style="left:467px;top:408px;font-size:17px;line-height:22px;color:#111;transform:scaleX(0.9823);">Овчарова Людмила</span>
<span class="t" style="left:467px;top:428px;font-size:17px;line-height:22px;color:#111;transform:scaleX(0.9706);">Валерьевна</span>
<span class="t" style="left:687px;top:418px;font-size:17px;line-height:22px;color:#1e8c1e;transform:scaleX(0.9625);">Выполнен</span>
<span class="t" style="left:796px;top:418px;font-size:17px;line-height:22px;color:#ffa826;">Нет</span>
<span class="t" style="left:1016px;top:418px;font-size:17px;line-height:22px;color:#ffa826;">Нет</span>
<span class="t" style="left:38px;top:461px;font-size:17px;line-height:22px;color:#111;transform:scaleX(0.9357);">02.08.2016 9:13</span>
<span class="t" style="left:256px;top:461px;font-size:17px;line-height:22px;color:#111;transform:scaleX(0.9368);">30.07.2016 12:10</span>
<span class="t" style="left:467px;top:451px;font-size:17px;line-height:22px;color:#111;transform:scaleX(0.9547);">Турназаров Илхомджон</span>
<span class="t" style="left:467px;top:471px;font-size:17px;line-height:22px;color:#111;transform:scaleX(0.9573);">Пирмухамедович</span>
<span class="t" style="left:687px;top:461px;font-size:17px;line-height:22px;color:#1e8c1e;transform:scaleX(0.9625);">Выполнен</span>
<span class="t" style="left:796px;top:461px;font-size:17px;line-height:22px;color:#ffa826;">Нет</span>
<span class="t" style="left:1016px;top:461px;font-size:17px;line-height:22px;color:#ffa826;">Нет</span>
<span class="t" style="left:38px;top:504px;font-size:17px;line-height:22px;color:#111;transform:scaleX(0.9368);">01.08.2016 13:58</span>
<span class="t" style="left:256px;top:504px;font-size:17px;line-height:22px;color:#111;transform:scaleX(0.9368);">30.07.2016 12:10</span>
<span class="t" style="left:467px;top:494px;font-size:17px;line-height:22px;color:#111;transform:scaleX(0.9547);">Турназаров Илхомджон</span>
<span class="t" style="left:467px;top:514px;font-size:17px;line-height:22px;color:#111;transform:scaleX(0.9573);">Пирмухамедович</span>
<span class="t" style="left:687px;top:504px;font-size:17px;line-height:22px;color:#14148c;transform:scaleX(0.9740);">В работе</span>
<span class="t" style="left:796px;top:504px;font-size:17px;line-height:22px;color:#ffa826;">Нет</span>
<span class="t" style="left:1016px;top:504px;font-size:17px;line-height:22px;color:#ffa826;">Нет</span>
<span class="t" style="left:38px;top:547px;font-size:17px;line-height:22px;color:#111;transform:scaleX(0.9357);">31.07.2016 3:13</span>
<span class="t" style="left:256px;top:547px;font-size:17px;line-height:22px;color:#111;transform:scaleX(0.9368);">30.07.2016 12:52</span>
<span class="t" style="left:467px;top:537px;font-size:17px;line-height:22px;color:#111;transform:scaleX(0.9725);">Рассадина Ольга</span>
<span class="t" style="left:467px;top:557px;font-size:17px;line-height:22px;color:#111;transform:scaleX(0.9805);">Александровна</span>
<span class="t" style="left:687px;top:547px;font-size:17px;line-height:22px;color:#1e8c1e;transform:scaleX(0.9625);">Выполнен</span>
<span class="t" style="left:796px;top:547px;font-size:17px;line-height:22px;color:#ffa826;">Нет</span>
<span class="t" style="left:1016px;top:547px;font-size:17px;line-height:22px;color:#ffa826;">Нет</span>
<span class="t" style="left:38px;top:590px;font-size:17px;line-height:22px;color:#111;transform:scaleX(0.9357);">31.07.2016 3:13</span>
<span class="t" style="left:256px;top:590px;font-size:17px;line-height:22px;color:#111;transform:scaleX(0.9368);">30.07.2016 12:29</span>
<span class="t" style="left:467px;top:580px;font-size:17px;line-height:22px;color:#111;transform:scaleX(0.9823);">Овчарова Людмила</span>
<span class="t" style="left:467px;top:600px;font-size:17px;line-height:22px;color:#111;transform:scaleX(0.9706);">Валерьевна</span>
<span class="t" style="left:687px;top:590px;font-size:17px;line-height:22px;color:#14148c;transform:scaleX(0.9740);">В работе</span>
<span class="t" style="left:796px;top:590px;font-size:17px;line-height:22px;color:#ffa826;">Нет</span>
<span class="t" style="left:1016px;top:590px;font-size:17px;line-height:22px;color:#ffa826;">Нет</span>
<span class="t" style="left:38px;top:633px;font-size:17px;line-height:22px;color:#111;transform:scaleX(0.9357);">31.07.2016 3:13</span>
<span class="t" style="left:256px;top:633px;font-size:17px;line-height:22px;color:#111;transform:scaleX(0.9368);">30.07.2016 12:10</span>
<span class="t" style="left:467px;top:623px;font-size:17px;line-height:22px;color:#111;transform:scaleX(0.9547);">Турназаров Илхомджон</span>
<span class="t" style="left:467px;top:643px;font-size:17px;line-height:22px;color:#111;transform:scaleX(0.9573);">Пирмухамедович</span>
<span class="t" style="left:687px;top:633px;font-size:17px;line-height:22px;color:#14148c;transform:scaleX(0.9740);">В работе</span>
<span class="t" style="left:796px;top:633px;font-size:17px;line-height:22px;color:#ffa826;">Нет</span>
<span class="t" style="left:1016px;top:633px;font-size:17px;line-height:22px;color:#ffa826;">Нет</span>
<span class="t" style="left:38px;top:676px;font-size:17px;line-height:22px;color:#111;transform:scaleX(0.9368);">30.07.2016 19:13</span>
<span class="t" style="left:256px;top:676px;font-size:17px;line-height:22px;color:#111;transform:scaleX(0.9368);">30.07.2016 12:52</span>
<span class="t" style="left:467px;top:666px;font-size:17px;line-height:22px;color:#111;transform:scaleX(0.9725);">Рассадина Ольга</span>
<span class="t" style="left:467px;top:686px;font-size:17px;line-height:22px;color:#111;transform:scaleX(0.9805);">Александровна</span>
<span class="t" style="left:687px;top:676px;font-size:17px;line-height:22px;color:#14148c;transform:scaleX(0.9740);">В работе</span>
<span class="t" style="left:796px;top:676px;font-size:17px;line-height:22px;color:#ffa826;">Нет</span>
<span class="t" style="left:1016px;top:676px;font-size:17px;line-height:22px;color:#ffa826;">Нет</span>
<span class="t" style="left:33px;top:705px;font-size:16px;line-height:21px;font-weight:bold;color:#0b0b8c;transform:scaleX(1.0724);">Реквизиты пациента</span>
<span class="t" style="left:33px;top:733px;font-size:17px;line-height:22px;color:#111;transform:scaleX(0.9686);">Пациент:</span>
<span class="t" style="left:119px;top:733px;font-size:17px;line-height:22px;color:#111;transform:scaleX(0.9755);">Овчарова Людмила Валерьевна</span>
<span class="t" style="left:524px;top:733px;font-size:17px;line-height:22px;color:#111;transform:scaleX(0.9844);">Электронная почта:</span>
<span class="t" style="left:695px;top:733px;font-size:17px;line-height:22px;color:#111;transform:scaleX(0.9188);">ovcharova_luda@mail.ru</span>
<span class="t" style="left:1000px;top:733px;font-size:17px;line-height:22px;color:#111;transform:scaleX(0.9814);">Отправлять на почту:</span>
<span class="t" style="left:1183px;top:733px;font-size:17px;line-height:22px;color:#1e8c1e;transform:scaleX(0.9776);">Да</span>
<div style="left:23px;top:698px;width:1227px;height:1px;background:#000"></div>
<div style="left:12px;top:699px;width:1250px;height:9px;background:#f4f3e8"></div>

</div>
</body></html>
